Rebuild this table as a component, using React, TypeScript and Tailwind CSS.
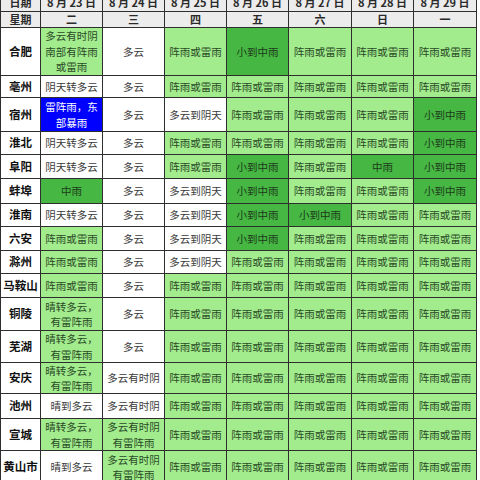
import React from "react";

type C = "W" | "L" | "M" | "B";
type Cell = [C, string];

const L = "阵雨或雷雨";
const X = "小到中雨";

const rows: { city: string; cells: Cell[] }[] = [
  { city: "合肥", cells: [["L", "多云有时阴\n南部有阵雨\n或雷雨"], ["W", "多云"], ["L", L], ["M", X], ["L", L], ["L", L], ["L", L]] },
  { city: "亳州", cells: [["W", "阴天转多云"], ["W", "多云"], ["L", L], ["L", L], ["L", L], ["L", L], ["L", L]] },
  { city: "宿州", cells: [["B", "雷阵雨，东\n部暴雨"], ["W", "多云"], ["W", "多云到阴天"], ["L", L], ["L", L], ["L", L], ["M", X]] },
  { city: "淮北", cells: [["W", "阴天转多云"], ["W", "多云"], ["L", L], ["L", L], ["L", L], ["L", L], ["M", X]] },
  { city: "阜阳", cells: [["W", "阴天转多云"], ["W", "多云"], ["L", L], ["M", X], ["L", L], ["M", "中雨"], ["M", X]] },
  { city: "蚌埠", cells: [["M", "中雨"], ["W", "多云"], ["W", "多云到阴天"], ["M", X], ["L", L], ["L", L], ["M", X]] },
  { city: "淮南", cells: [["W", "阴天转多云"], ["W", "多云"], ["W", "多云到阴天"], ["M", X], ["M", X], ["L", L], ["L", L]] },
  { city: "六安", cells: [["L", L], ["W", "多云"], ["W", "多云到阴天"], ["M", X], ["L", L], ["L", L], ["L", L]] },
  { city: "滁州", cells: [["L", L], ["W", "多云"], ["W", "多云到阴天"], ["L", L], ["L", L], ["L", L], ["L", L]] },
  { city: "马鞍山", cells: [["L", L], ["W", "多云"], ["L", L], ["L", L], ["L", L], ["L", L], ["L", L]] },
  { city: "铜陵", cells: [["L", "晴转多云，\n有雷阵雨"], ["W", "多云"], ["L", L], ["L", L], ["L", L], ["L", L], ["L", L]] },
  { city: "芜湖", cells: [["L", "晴转多云，\n有雷阵雨"], ["W", "多云"], ["L", L], ["L", L], ["L", L], ["L", L], ["L", L]] },
  { city: "安庆", cells: [["L", "晴转多云，\n有雷阵雨"], ["W", "多云有时阴"], ["L", L], ["L", L], ["L", L], ["L", L], ["L", L]] },
  { city: "池州", cells: [["W", "晴到多云"], ["W", "多云有时阴"], ["L", L], ["L", L], ["L", L], ["L", L], ["L", L]] },
  { city: "宣城", cells: [["L", "晴转多云，\n有雷阵雨"], ["L", "多云有时阴\n有雷阵雨"], ["L", L], ["L", L], ["L", L], ["L", L], ["L", L]] },
  { city: "黄山市", cells: [["W", "晴到多云"], ["L", "多云有时阴\n有雷阵雨"], ["L", L], ["L", L], ["L", L], ["L", L], ["L", L]] },
];

const dates = ["8 月 23 日", "8 月 24 日", "8 月 25 日", "8 月 26 日", "8 月 27 日", "8 月 28 日", "8 月 29 日"];
const days = ["二", "三", "四", "五", "六", "日", "一"];

function cls(c: C) {
  switch (c) {
    case "W":
      return "bg-white text-[#3a3a3a]";
    case "L":
      return "bg-[#a2ec8e] text-[#2a4a26]";
    case "M":
      return "bg-[#45b742] text-[#1e3a1c]";
    case "B":
      return "bg-[#0000ff] text-white";
  }
}

export default function App() {
  return (
    <div
      className="w-[480px] h-[480px] overflow-hidden bg-white"
      style={{ fontFamily: '"Noto Sans CJK SC", "Noto Sans", sans-serif' }}
    >
      <div className="mt-[-8px] grid w-max grid-cols-[39px_61px_61px_61px_61px_62px_61px_62px] grid-rows-[18px_15px_47px_21px_33px_22px_23px_24px_22px_23px_22px_23px_32px_31px_30px_24px_31px_32px] gap-px bg-[#2e2e2e] p-px">
        <div className="bg-[#ececec] flex items-center justify-center text-[11px] font-bold text-[#2a2a2a] leading-none">日期</div>
        {dates.map((d) => (
          <div key={d} className="bg-[#ececec] flex items-center justify-center text-[11px] font-bold text-[#2a2a2a] leading-none whitespace-pre">
            {d}
          </div>
        ))}
        <div className="bg-[#ececec] flex items-center justify-center text-[11px] font-bold text-[#2a2a2a] leading-none">星期</div>
        {days.map((d) => (
          <div key={d} className="bg-[#ececec] flex items-center justify-center text-[11px] font-bold text-[#2a2a2a] leading-none">
            {d}
          </div>
        ))}
        {rows.map((r) => (
          <React.Fragment key={r.city}>
            <div className="bg-white flex items-center justify-center text-[11.5px] font-bold text-[#111] leading-none whitespace-nowrap">
              {r.city}
            </div>
            {r.cells.map(([c, t], i) => (
              <div
                key={i}
                className={`${cls(c)} flex items-center justify-center text-center text-[10.5px] leading-[15.5px] whitespace-pre`}
              >
                {t}
              </div>
            ))}
          </React.Fragment>
        ))}
      </div>
    </div>
  );
}
